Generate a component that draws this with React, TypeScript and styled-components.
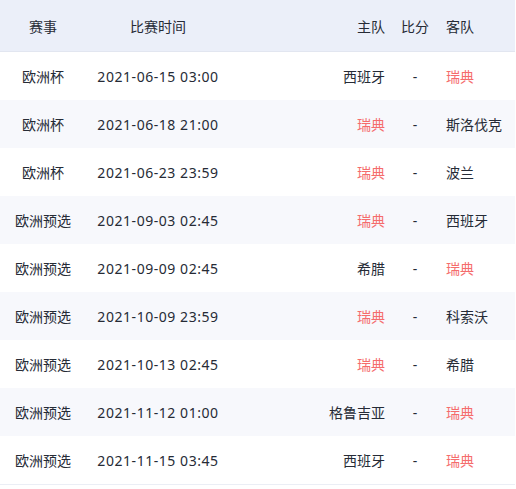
import React from 'react';
import styled, { createGlobalStyle } from 'styled-components'

const Global = createGlobalStyle`
    body {
        margin: 0;
        background: #fff;
        font-family: "Noto Sans", "Noto Sans CJK SC", sans-serif;
    }
`

const Table = styled.div`
    width: 515px;
    font-size: 14px;
    color: #262b36;
    border-bottom: 1px solid #ebeef5;
`

const Row = styled.div<{ $head?: boolean; $stripe?: boolean }>`
    display: grid;
    grid-template-columns: 86px 144px 165px 40px 80px;
    align-items: center;
    height: ${p => p.$head ? '52px' : '48px'};
    background: ${p => p.$head ? '#ebeff9' : p.$stripe ? '#f7f8fc' : '#fff'};
    border-bottom: ${p => p.$head ? '1px solid #e2e6f0' : 'none'};
    box-sizing: border-box;
`

const Cell = styled.div<{ $align?: 'left' | 'center' | 'right'; $red?: boolean; $time?: boolean }>`
    text-align: ${p => p.$align || 'center'};
    padding: ${p => p.$align === 'right' ? '0 10px 0 0' : p.$align === 'left' ? '0 0 0 11px' : '0'};
    color: ${p => p.$red ? '#f56c6c' : '#262b36'};
    letter-spacing: ${p => p.$time ? '0.55px' : '0'};
    white-space: nowrap;
`

const matches = [
    ['欧洲杯', '2021-06-15 03:00', '西班牙', '瑞典'],
    ['欧洲杯', '2021-06-18 21:00', '瑞典', '斯洛伐克'],
    ['欧洲杯', '2021-06-23 23:59', '瑞典', '波兰'],
    ['欧洲预选', '2021-09-03 02:45', '瑞典', '西班牙'],
    ['欧洲预选', '2021-09-09 02:45', '希腊', '瑞典'],
    ['欧洲预选', '2021-10-09 23:59', '瑞典', '科索沃'],
    ['欧洲预选', '2021-10-13 02:45', '瑞典', '希腊'],
    ['欧洲预选', '2021-11-12 01:00', '格鲁吉亚', '瑞典'],
    ['欧洲预选', '2021-11-15 03:45', '西班牙', '瑞典'],
]

function App() {
    return (
        <React.Fragment>
            <Global />
            <Table>
                <Row $head>
                    <Cell>赛事</Cell>
                    <Cell>比赛时间</Cell>
                    <Cell $align="right">主队</Cell>
                    <Cell>比分</Cell>
                    <Cell $align="left">客队</Cell>
                </Row>
                {matches.map(([league, time, home, away], i) => (
                    <Row key={i} $stripe={i % 2 === 1}>
                        <Cell>{league}</Cell>
                        <Cell $time>{time}</Cell>
                        <Cell $align="right" $red={home === '瑞典'}>{home}</Cell>
                        <Cell>-</Cell>
                        <Cell $align="left" $red={away === '瑞典'}>{away}</Cell>
                    </Row>
                ))}
            </Table>
        </React.Fragment>
    );
}

export default App;
